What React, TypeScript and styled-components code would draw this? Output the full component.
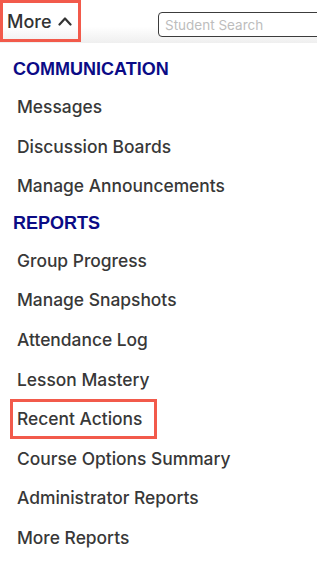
import React from "react";
import styled, { createGlobalStyle, css } from "styled-components";

const GlobalStyle = createGlobalStyle`
  html, body {
    margin: 0;
    padding: 0;
    background: #ffffff;
    overflow: hidden;
  }
  body {
    font-family: "Inter", "Noto Sans", sans-serif;
  }
`;

const Page = styled.div`
  width: 317px;
  height: 564px;
  overflow: hidden;
  background: #ffffff;
`;

const TopBar = styled.div`
  display: flex;
  align-items: flex-start;
  height: 43px;
  overflow: hidden;
  background: linear-gradient(to bottom, #ffffff 0%, #ffffff 62%, #efefef 100%);
`;

const MoreButton = styled.button`
  display: flex;
  flex: none;
  align-items: center;
  gap: 6px;
  box-sizing: border-box;
  width: 81px;
  height: 42px;
  margin: 0;
  padding: 0 0 0 4px;
  border: 3px solid #f25a4b;
  background: transparent;
  font-family: "Inter", sans-serif;
  font-size: 18px;
  font-weight: 500;
  color: #333333;
  cursor: pointer;
`;

const Search = styled.input`
  box-sizing: border-box;
  flex: none;
  width: 175px;
  height: 25px;
  margin: 12px 0 0 77px;
  padding: 0 6px;
  border: 1px solid #3c3c3c;
  border-radius: 4px;
  font-family: "Inter", sans-serif;
  font-size: 13.5px;
  color: #333333;
  background: #ffffff;
  outline: none;

  &::placeholder {
    color: #bdbdbd;
  }
`;

const Menu = styled.nav`
  display: flex;
  flex-direction: column;
  padding-top: 9px;
`;

const SectionTitle = styled.div`
  padding-left: 13px;
  line-height: 35px;
  font-family: "Liberation Sans", Arial, sans-serif;
  font-size: 18px;
  font-weight: 700;
  color: #0b0b86;
`;

const Item = styled.a<{ $active?: boolean }>`
  display: block;
  box-sizing: border-box;
  align-self: flex-start;
  height: 39.6px;
  margin-left: 10px;
  padding: 0 12px 0 4px;
  border: 3px solid transparent;
  line-height: 33.6px;
  font-size: 17.4px;
  font-weight: 500;
  color: #383838;
  text-decoration: none;
  white-space: nowrap;

  ${(p) =>
    p.$active &&
    css`
      border-color: #f25a4b;
    `}
`;

const ChevronUp = () => (
  <svg width="14" height="10" viewBox="0 0 14 10" fill="none">
    <path
      d="M1.5 8.5 L7 2.5 L12.5 8.5"
      stroke="#333333"
      strokeWidth="2.2"
      strokeLinecap="round"
      strokeLinejoin="round"
    />
  </svg>
);

const sections = [
  {
    title: "COMMUNICATION",
    items: ["Messages", "Discussion Boards", "Manage Announcements"],
  },
  {
    title: "REPORTS",
    items: [
      "Group Progress",
      "Manage Snapshots",
      "Attendance Log",
      "Lesson Mastery",
      "Recent Actions",
      "Course Options Summary",
      "Administrator Reports",
      "More Reports",
    ],
  },
];

function App() {
  return (
    <Page>
      <GlobalStyle />
      <TopBar>
        <MoreButton>
          More
          <ChevronUp />
        </MoreButton>
        <Search placeholder="Student Search" />
      </TopBar>
      <Menu>
        {sections.map((section) => (
          <React.Fragment key={section.title}>
            <SectionTitle>{section.title}</SectionTitle>
            {section.items.map((item) => (
              <Item key={item} $active={item === "Recent Actions"}>
                {item}
              </Item>
            ))}
          </React.Fragment>
        ))}
      </Menu>
    </Page>
  );
}

export default App;
